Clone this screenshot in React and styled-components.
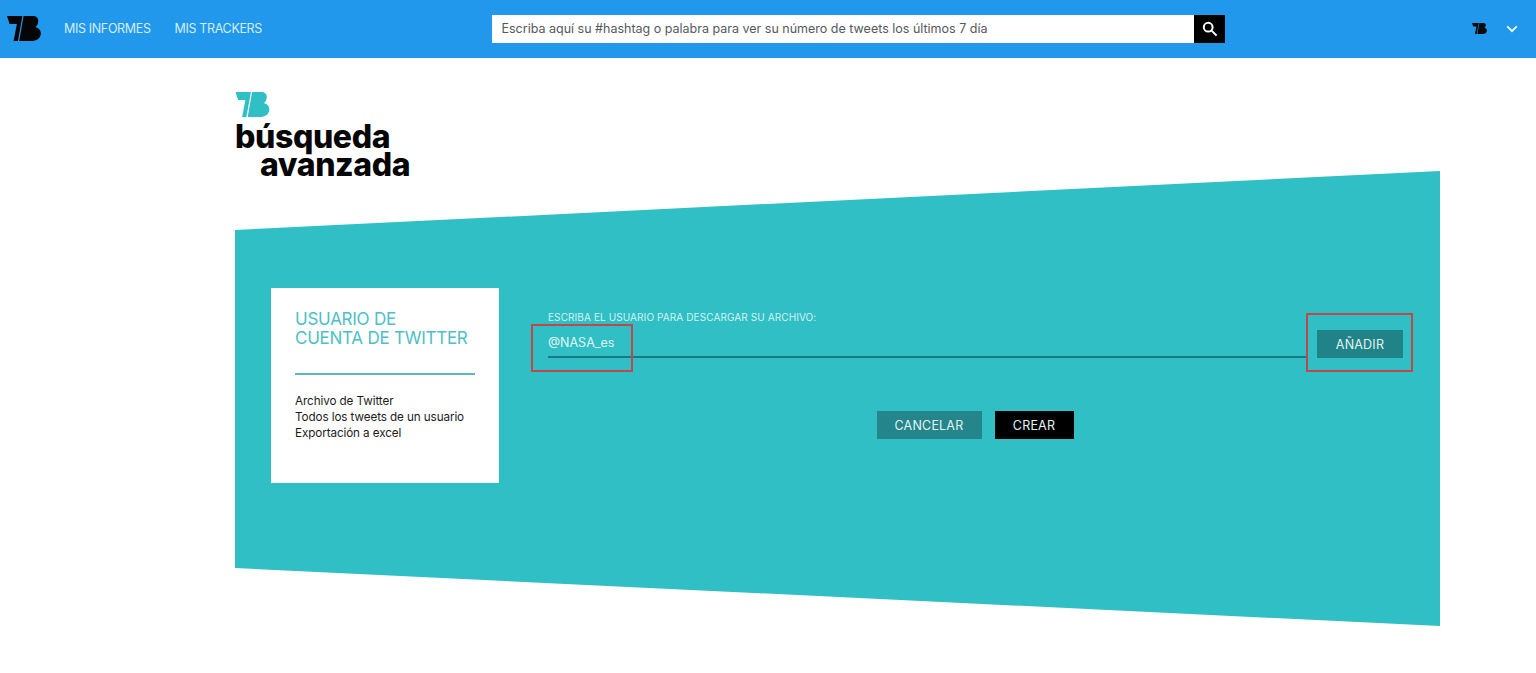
import React from "react";
import styled, { createGlobalStyle } from "styled-components";

const GlobalStyle = createGlobalStyle`
  html, body {
    margin: 0;
    padding: 0;
    background: #fff;
    font-family: "Inter", "Open Sans", sans-serif;
    overflow: hidden;
  }
  * {
    box-sizing: border-box;
  }
`;

function TbLogo({ width, height, color }) {
  return (
    <LogoSvg width={width} height={height} viewBox="0 0 34 25" fill={color} aria-hidden="true">
      <path d="M0 0H15.4L10.9 25H6.6L9.9 8H2.6Z" />
      <path d="M16.6 0H25.5C29.6 0 31.6 2.4 31.2 5.8C31 8 30.2 9.8 28.4 11C32 12 34.2 14.6 33.8 18C33.4 22.4 29.4 25 24.4 25H12.2Z" />
    </LogoSvg>
  );
}

export default function App() {
  return (
    <>
      <GlobalStyle />
      <Header>
        <HeaderLeft>
          <TbLogo width={34} height={25} color="#050505" />
          <Nav>
            <NavLink>MIS INFORMES</NavLink>
            <NavLink>MIS TRACKERS</NavLink>
          </Nav>
        </HeaderLeft>
        <SearchBar>
          <SearchInput
            readOnly
            value="Escriba aquí su #hashtag o palabra para ver su número de tweets los últimos 7 día"
          />
          <SearchButton aria-label="Buscar">
            <svg width="16" height="16" viewBox="0 0 16 16" fill="none" stroke="#fff" strokeWidth="2">
              <circle cx="6.2" cy="6.2" r="4.4" />
              <path d="M9.6 9.6L14.6 14.6" />
            </svg>
          </SearchButton>
        </SearchBar>
        <UserMenu>
          <TbLogo width={15} height={11} color="#0b0b0b" />
          <svg width="12" height="8" viewBox="0 0 12 8" fill="none" stroke="#e6f4fd" strokeWidth="2">
            <path d="M1.2 1.4L6 6L10.8 1.4" />
          </svg>
        </UserMenu>
      </Header>

      <Main>
        <Brand>
          <TbLogo width={35} height={25} color="#2fbfc4" />
          <Title>
            <TitleLine>búsqueda</TitleLine>
            <TitleLine $indent>avanzada</TitleLine>
          </Title>
        </Brand>

        <Panel>
          <InfoCard>
            <CardTitle>
              USUARIO DE
              <br />
              CUENTA DE TWITTER
            </CardTitle>
            <CardRule />
            <CardList>
              <li>Archivo de Twitter</li>
              <li>Todos los tweets de un usuario</li>
              <li>Exportación a excel</li>
            </CardList>
          </InfoCard>

          <Form>
            <FieldLabel>ESCRIBA EL USUARIO PARA DESCARGAR SU ARCHIVO:</FieldLabel>
            <FieldRow>
              <UserField>
                @NASA_es
                <Highlight $left={-17} $top={-6} $width={102} $height={48} />
              </UserField>
              <AddWrap>
                <ActionButton $bg="#1f8388" $width={86}>AÑADIR</ActionButton>
                <Highlight $left={-11} $top={-17} $width={107} $height={59} />
              </AddWrap>
            </FieldRow>
            <Actions>
              <ActionButton $bg="#24858b" $width={105}>CANCELAR</ActionButton>
              <ActionButton $bg="#000" $width={79}>CREAR</ActionButton>
            </Actions>
          </Form>
        </Panel>
      </Main>
    </>
  );
}

const LogoSvg = styled.svg`
  flex: none;
`;

const Header = styled.header`
  display: flex;
  align-items: center;
  height: 58px;
  padding: 0 18px 0 7px;
  background: #2198ec;
`;

const HeaderLeft = styled.div`
  display: flex;
  align-items: center;
  gap: 23px;
  width: 485px;
  padding-bottom: 1px;
`;

const Nav = styled.nav`
  display: flex;
  gap: 24px;
`;

const NavLink = styled.a`
  color: #d3ecfb;
  font-size: 12.5px;
  letter-spacing: -0.35px;
`;

const SearchBar = styled.div`
  display: flex;
  width: 733px;
  height: 28px;
  margin-bottom: 1px;
`;

const SearchInput = styled.input`
  flex: 1;
  min-width: 0;
  height: 100%;
  padding: 0 9.5px;
  border: 0;
  outline: 0;
  background: #fff;
  color: #55595c;
  font-family: "Inter", "Open Sans", sans-serif;
  font-size: 12.5px;
`;

const SearchButton = styled.button`
  display: flex;
  align-items: center;
  justify-content: center;
  width: 31px;
  height: 100%;
  padding: 0;
  border: 0;
  background: #000;
`;

const UserMenu = styled.div`
  display: flex;
  align-items: center;
  gap: 19px;
  margin-left: auto;
  padding-bottom: 1px;
`;

const Main = styled.main`
  width: 1205px;
  margin-left: 235px;
  padding-top: 34px;
`;

const Brand = styled.div`
  display: flex;
  flex-direction: column;
  align-items: flex-start;
  height: 79px;
`;

const Title = styled.h1`
  flex: none;
  margin: 6px 0 0;
  color: #060606;
  font-size: 32px;
  font-weight: 800;
  line-height: 28px;
  letter-spacing: -0.4px;
  white-space: nowrap;
`;

const TitleLine = styled.div`
  padding-left: ${(p) => (p.$indent ? "25px" : "0")};
`;

const Panel = styled.section`
  display: flex;
  align-items: flex-start;
  gap: 49px;
  height: 455px;
  padding: 117px 37px 0 36px;
  background: #2fbfc4;
  clip-path: polygon(0 59px, 100% 0, 100% 100%, 0 397px);
`;

const InfoCard = styled.div`
  flex: 0 0 228px;
  height: 195px;
  padding: 22px 24px 0 24px;
  background: #fff;
`;

const CardTitle = styled.h2`
  margin: 0;
  color: #4dbfc5;
  font-size: 17px;
  font-weight: 400;
  line-height: 19px;
  letter-spacing: -0.25px;
  white-space: nowrap;
`;

const CardRule = styled.div`
  height: 2px;
  margin: 25px 0 18px;
  background: #5cb8bd;
`;

const CardList = styled.ul`
  margin: 0;
  padding: 0;
  list-style: none;
  color: #1c1c1c;
  font-size: 11.7px;
  line-height: 16px;
  letter-spacing: -0.1px;
  white-space: nowrap;
`;

const Form = styled.div`
  flex: 1;
  padding-top: 23px;
`;

const FieldLabel = styled.div`
  color: #d7f2f3;
  font-size: 10px;
  line-height: 12px;
  letter-spacing: 0.1px;
`;

const FieldRow = styled.div`
  display: flex;
  align-items: flex-end;
  margin-top: 7px;
`;

const UserField = styled.div`
  position: relative;
  flex: 1;
  height: 28px;
  padding-top: 5px;
  border-bottom: 2px solid #167c80;
  color: #e2f6f6;
  font-size: 12.5px;
  line-height: 16px;
`;

const AddWrap = styled.div`
  position: relative;
  margin-left: 10px;
`;

const ActionButton = styled.button`
  display: block;
  width: ${(p) => p.$width}px;
  height: 28px;
  padding: 0;
  border: 0;
  background: ${(p) => p.$bg};
  color: #e4f3f3;
  font-family: "Inter", "Open Sans", sans-serif;
  font-size: 12.5px;
  letter-spacing: 0.2px;
`;

const Actions = styled.div`
  display: flex;
  justify-content: center;
  gap: 13px;
  margin: 53px 0 0 -1px;
`;

const Highlight = styled.span`
  position: absolute;
  left: ${(p) => p.$left}px;
  top: ${(p) => p.$top}px;
  width: ${(p) => p.$width}px;
  height: ${(p) => p.$height}px;
  border: 2px solid #c0484a;
  pointer-events: none;
`;
